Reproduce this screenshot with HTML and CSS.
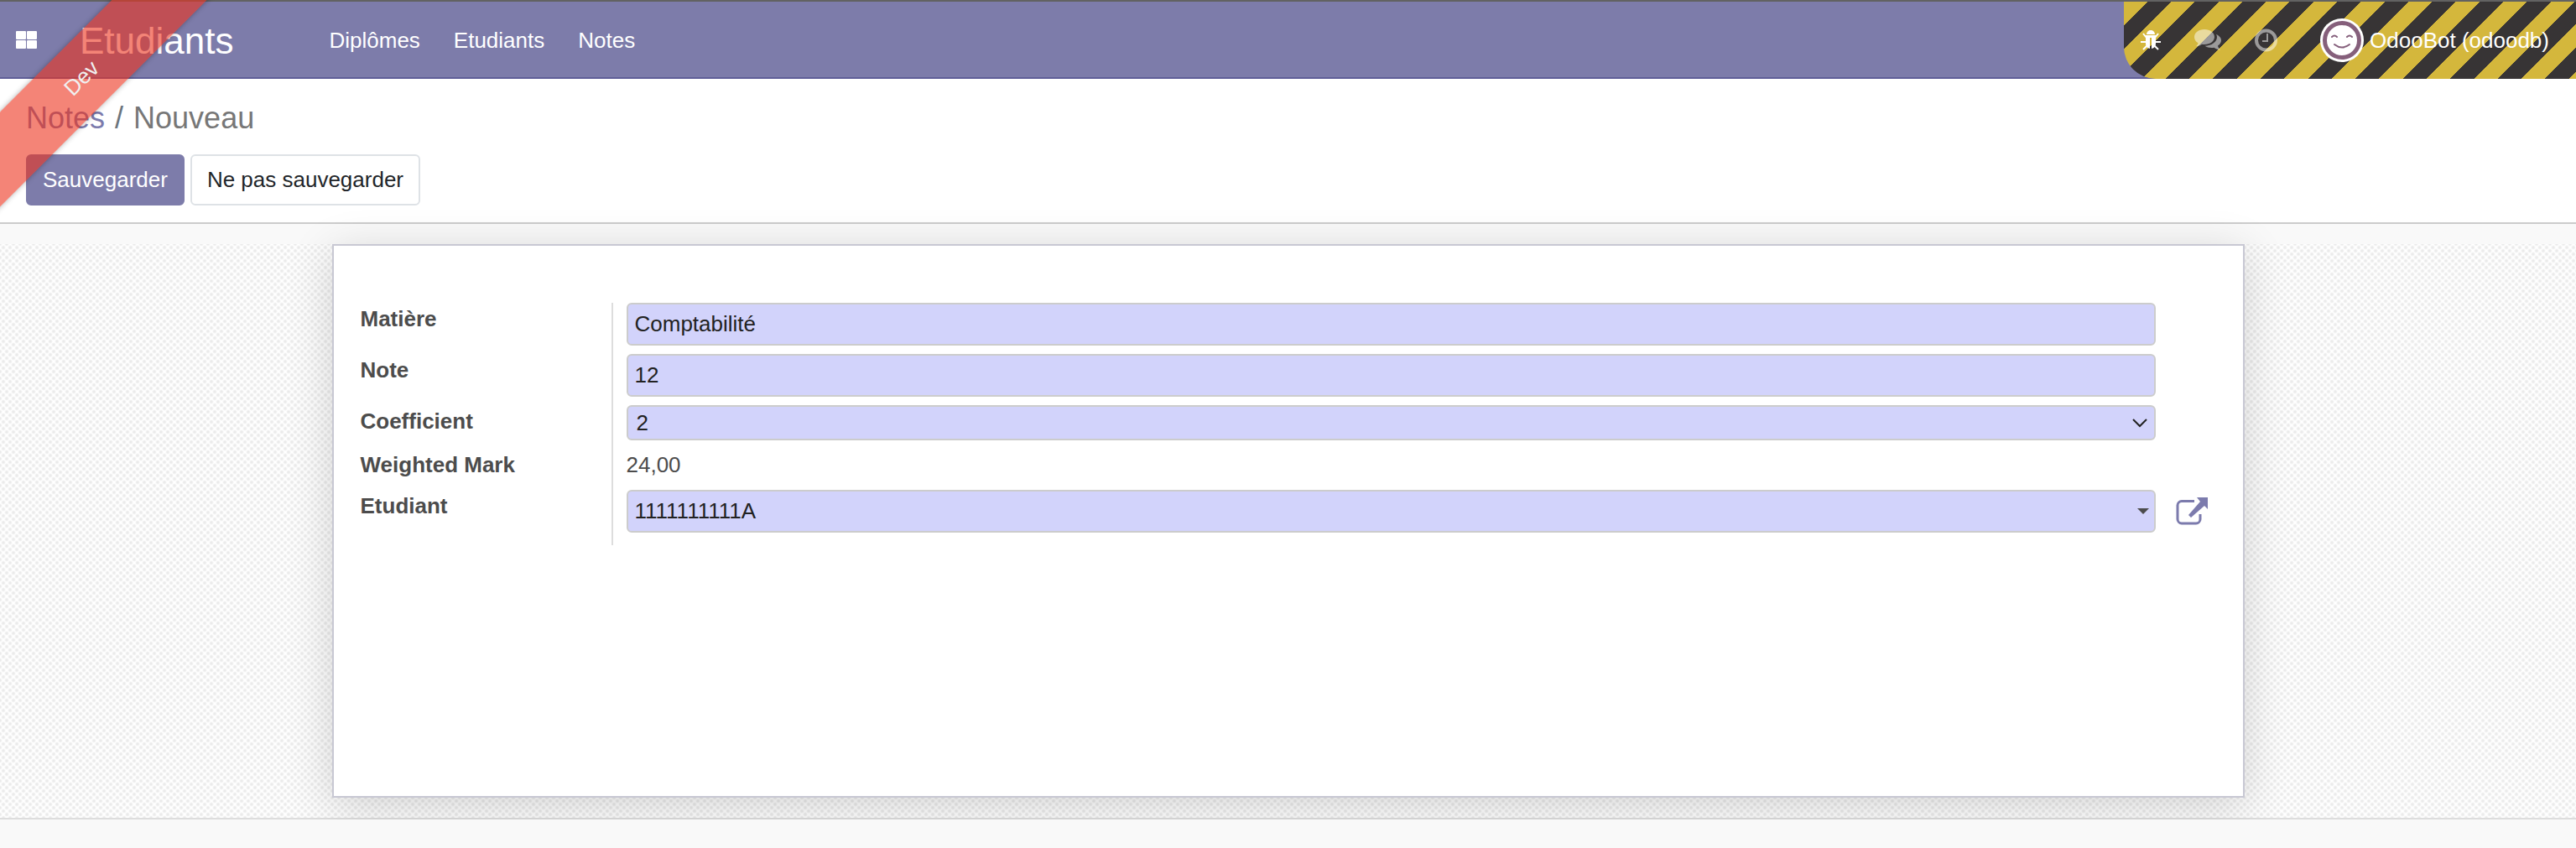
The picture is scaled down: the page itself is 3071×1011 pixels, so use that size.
FILE: index.html
```
<!DOCTYPE html>
<html lang="fr">

<head>
  <meta charset="UTF-8">
  <meta name="viewport" content="width=device-width, initial-scale=1.0">
  <title>Nouveau - Etudiants</title>
  <link rel="stylesheet" href="styles.css">
</head>

<body>
  <div class="ribbon">Dev</div>

  <header class="navbar">
    <button class="apps-btn" aria-label="Applications">
      <svg width="25" height="22" viewBox="0 0 25 22" fill="#fff">
        <rect x="0" y="0" width="12" height="10" rx="1" />
        <rect x="13" y="0" width="12" height="10" rx="1" />
        <rect x="0" y="11" width="12" height="10" rx="1" />
        <rect x="13" y="11" width="12" height="10" rx="1" />
      </svg>
    </button>
    <a href="#" class="brand">Etudiants</a>
    <nav class="menu">
      <a href="#">Diplômes</a>
      <a href="#">Etudiants</a>
      <a href="#">Notes</a>
    </nav>

    <div class="systray">
      <button class="tray-btn" aria-label="Debug">
        <svg width="24" height="24" viewBox="0 0 24 24" fill="#fff">
          <path d="M7 5a5 5 0 0 1 10 0z" />
          <path d="M6 6h12v10a6 6 0 0 1-5 6V9h-2v13a6 6 0 0 1-5-6z" />
          <path d="M7 9L3 4M17 9l4-5M7 14H0M17 14h7M8 18l-5 5M16 18l5 5" stroke="#fff" stroke-width="2" fill="none" />
        </svg>
      </button>
      <button class="tray-btn dim" aria-label="Discussions">
        <svg width="32" height="26" viewBox="0 0 32 26" fill="#fff">
          <path d="M12 0c7 0 12 4 12 9s-5 9-12 9c-1 0-2 0-3-.2-2 1.500-4 2.200-7 2.500 1.500-1.300 2.300-2.600 2.500-4C1.700 14.700 0 12 0 9c0-5 5-9 12-9z" />
          <path d="M26 6c3.500 1.500 6 4 6 7 0 2.700-1.600 5-4 6.500.3 1.800 1.200 3.300 3 4.900-3.200-.2-5.600-1.200-7.500-2.700-4 .6-8 0-11-2 8 0 14.500-4.700 14.500-10.700 0-1-.4-2-1-3z" />
        </svg>
      </button>
      <button class="tray-btn dim" aria-label="Activités">
        <svg width="28" height="28" viewBox="0 0 28 28" fill="none" stroke="#fff">
          <circle cx="13.500" cy="14" r="11.500" stroke-width="4" />
          <path d="M15 6v9H9" stroke-width="2" />
        </svg>
      </button>
      <button class="user-btn">
        <svg class="avatar" width="52" height="52" viewBox="0 0 52 52">
          <circle cx="26" cy="26" r="26" fill="#fff" />
          <circle cx="26" cy="26" r="20.500" fill="none" stroke="#855f7b" stroke-width="5" />
          <path d="M14 22q3-3 6 0M32 22q3-3 6 0M17 31q9 7 18 0" fill="none" stroke="#855f7b" stroke-width="2" stroke-linecap="round" />
        </svg>
        <span>OdooBot (odoodb)</span>
      </button>
    </div>
  </header>

  <section class="control-panel">
    <div class="breadcrumb">
      <a href="#">Notes</a>
      <span class="separator">/</span>
      <span>Nouveau</span>
    </div>
    <div class="buttons">
      <button class="btn btn-primary">Sauvegarder</button>
      <button class="btn btn-secondary">Ne pas sauvegarder</button>
    </div>
  </section>

  <main class="form-view">
    <div class="sheet-bg">
      <form class="sheet">
        <div class="row">
          <label for="matiere">Matière</label>
          <div class="field"><input type="text" id="matiere" value="Comptabilité"></div>
        </div>
        <div class="row">
          <label for="note">Note</label>
          <div class="field"><input type="text" id="note" value="12"></div>
        </div>
        <div class="row">
          <label for="coefficient">Coefficient</label>
          <div class="field">
            <select id="coefficient">
              <option>1</option>
              <option selected>2</option>
              <option>3</option>
            </select>
            <svg class="chevron" width="18" height="12" viewBox="0 0 18 12" fill="none" stroke="#222" stroke-width="2">
              <path d="M1 1l8 8 8-8" />
            </svg>
          </div>
        </div>
        <div class="row">
          <label for="weighted">Weighted Mark</label>
          <div class="field"><output id="weighted">24,00</output></div>
        </div>
        <div class="row">
          <label for="etudiant">Etudiant</label>
          <div class="field">
            <input type="text" id="etudiant" value="1111111111A">
            <svg class="caret" width="14" height="7" viewBox="0 0 14 7" fill="#4c4c4c">
              <path d="M0 0h14L7 7z" />
            </svg>
            <button type="button" class="external-btn" aria-label="Lien externe">
              <svg width="38" height="34" viewBox="0 0 38 34">
                <path d="M22 4.500H7a5 5 0 0 0-5 5V26a5 5 0 0 0 5 5h17a5 5 0 0 0 5-5v-6" fill="none" stroke="#7c7bad" stroke-width="3" />
                <path d="M25 0h13v14l-4-4-16 14-3-3L29 5z" fill="#7c7bad" />
              </svg>
            </button>
          </div>
        </div>
      </form>
    </div>
  </main>
</body>

</html>
```
FILE: styles.css
```
* {
  box-sizing: border-box;
}

body {
  margin: 0;
  background-color: #f9f9f9;
  color: #4c4c4c;
  font-family: "Liberation Sans", Arial, sans-serif;
  font-size: 26px;
  line-height: 39px;
  overflow-x: hidden;
}

a {
  text-decoration: none;
}

button {
  border: none;
  background: none;
  padding: 0;
  font: inherit;
  color: inherit;
  cursor: pointer;
}

svg {
  display: block;
}

.ribbon {
  position: absolute;
  top: 53px;
  left: -103px;
  z-index: 10;
  width: 400px;
  line-height: 80px;
  text-align: center;
  color: #f0f0f0;
  background-color: rgba(237, 50, 28, 0.6);
  box-shadow: 0 0 6px rgba(0, 0, 0, 0.3);
  transform: rotate(-45deg);
  pointer-events: none;
}

/* Navbar */
.navbar {
  display: flex;
  align-items: center;
  height: 94px;
  border-top: 2px solid #626262;
  background-color: #7d7caa;
  box-shadow: inset 0 -2px #5f5e97;
  color: white;
}

.navbar a {
  color: white;
}

.apps-btn {
  margin-left: 19px;
}

.brand {
  margin-left: 51px;
  font-size: 44px;
}

.menu {
  display: flex;
  margin-left: 94px;
}

.menu a {
  padding: 0 20px;
}

.systray {
  display: flex;
  align-items: center;
  height: 92px;
  margin-left: auto;
  padding: 0 32px 0 20px;
  border-bottom-left-radius: 38px;
  background: repeating-linear-gradient(135deg, #d4b73c, #d4b73c 20px, #373435 20px, #373435 40px);
}

.tray-btn {
  margin-right: 40px;
}

.dim {
  opacity: 0.5;
}

.user-btn {
  display: flex;
  align-items: center;
  gap: 7px;
  margin-left: 10px;
}

/* Control panel */
.control-panel {
  padding: 20px 31px;
  border-bottom: 2px solid #ccc;
  background-color: white;
}

.breadcrumb {
  display: flex;
  gap: 12px;
  margin-bottom: 16px;
  font-size: 36px;
  line-height: 54px;
  color: #777;
}

.breadcrumb a {
  color: #7c7bad;
}

.separator {
  color: #6c757d;
}

.buttons {
  display: flex;
  gap: 7px;
}

.btn {
  padding: 9px 18px;
  border: 2px solid #7d7caa;
  border-radius: 6px;
}

.btn-primary {
  background-color: #7d7caa;
  color: white;
}

.btn-secondary {
  background-color: white;
  border-color: #dee2e6;
  color: #212529;
}

/* Form */
.form-view {
  padding-top: 24px;
}

.sheet-bg {
  padding-bottom: 24px;
  border-bottom: 2px solid #ddd;
  background-color: white;
  background-image: radial-gradient(circle, #ebebeb 1px, transparent 3px), radial-gradient(circle, #ebebeb 1px, transparent 3px);
  background-size: 8px 8px;
  background-position: 0 0, 4px 4px;
}

.sheet {
  max-width: 2280px;
  min-height: 660px;
  margin: 0 auto;
  padding: 68px 32px;
  border: 2px solid #c8c8d3;
  background-color: white;
  box-shadow: 0 10px 50px rgba(0, 0, 0, 0.16);
}

.row {
  display: flex;
}

.row label {
  width: 299px;
  font-weight: bold;
}

.field {
  position: relative;
  flex: 1;
  padding: 0 72px 10px 16px;
  border-left: 2px solid #ddd;
}

.row:last-child .field {
  padding-bottom: 15px;
}

.field input,
.field select {
  display: block;
  width: 100%;
  height: 51px;
  padding: 0 8px;
  border: 2px solid #ccc;
  border-radius: 6px;
  background-color: #d2d3fb;
  color: #222;
  font: inherit;
}

.field select {
  height: 42px;
  padding: 0 10px;
  appearance: none;
}

.field output {
  display: block;
}

.chevron,
.caret,
.external-btn {
  position: absolute;
}

.chevron {
  top: 16px;
  right: 82px;
  pointer-events: none;
}

.caret {
  top: 22px;
  right: 80px;
  pointer-events: none;
}

.external-btn {
  top: 9px;
  right: 10px;
}
```
